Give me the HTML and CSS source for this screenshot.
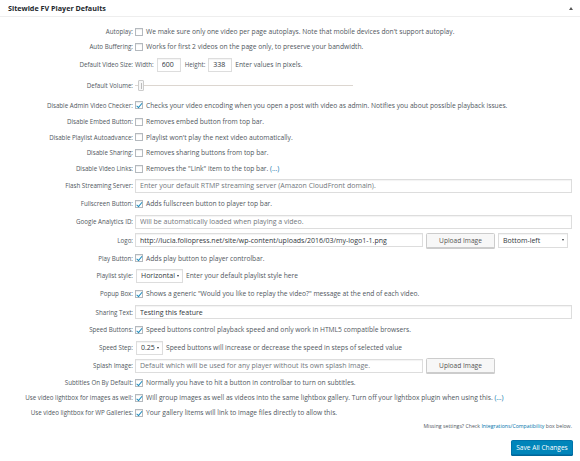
FILE: index.html
```html
<!DOCTYPE html>
<html lang="en">
<head>
<meta charset="utf-8">
<title>Sitewide FV Player Defaults</title>
<link rel="stylesheet" href="styles.css">
</head>
<body>
<div class="panel">
  <div class="panel-head">
    <h2 class="panel-title">Sitewide FV Player Defaults</h2>
    <span class="toggle"></span>
  </div>
  <div class="form">
    <div class="row h15"><label class="lbl">Autoplay:</label><div class="field"><input type="checkbox" class="cb"><span class="desc">We make sure only one video per page autoplays. Note that mobile devices don't support autoplay.</span></div></div>
    <div class="row h155"><label class="lbl">Auto Buffering:</label><div class="field"><input type="checkbox" class="cb"><span class="desc">Works for first 2 videos on the page only, to preserve your bandwidth.</span></div></div>
    <div class="row h205"><label class="lbl">Default Video Size:</label><div class="field"><span class="sub">Width:</span><input class="txt small" value="600"><span class="sub">Height:</span><input class="txt small" value="338"><span class="desc">Enter values in pixels.</span></div></div>
    <div class="row h215"><label class="lbl">Default Volume:</label><div class="field"><div class="slider"><span class="handle"></span></div></div></div>
    <div class="row h175"><label class="lbl">Disable Admin Video Checker:</label><div class="field"><input type="checkbox" class="cb" checked><span class="desc">Checks your video encoding when you open a post with video as admin. Notifies you about possible playback issues.</span></div></div>
    <div class="row h155"><label class="lbl">Disable Embed Button:</label><div class="field"><input type="checkbox" class="cb"><span class="desc">Removes embed button from top bar.</span></div></div>
    <div class="row h155"><label class="lbl">Disable Playlist Autoadvance:</label><div class="field"><input type="checkbox" class="cb"><span class="desc">Playlist won't play the next video automatically.</span></div></div>
    <div class="row h155"><label class="lbl">Disable Sharing:</label><div class="field"><input type="checkbox" class="cb"><span class="desc">Removes sharing buttons from top bar.</span></div></div>
    <div class="row h16"><label class="lbl">Disable Video Links:</label><div class="field"><input type="checkbox" class="cb"><span class="desc">Removes the "Link" item to the top bar. <a class="more" href="#">(...)</a></span></div></div>
    <div class="row h18"><label class="lbl">Flash Streaming Server:</label><div class="field"><input class="txt wide" placeholder="Enter your default RTMP streaming server (Amazon CloudFront domain)."></div></div>
    <div class="row h18"><label class="lbl">Fullscreen Button:</label><div class="field"><input type="checkbox" class="cb" checked><span class="desc">Adds fullscreen button to player top bar.</span></div></div>
    <div class="row h185"><label class="lbl">Google Analytics ID:</label><div class="field"><input class="txt wide" placeholder="Will be automatically loaded when playing a video."></div></div>
    <div class="row h185"><label class="lbl">Logo:</label><div class="field"><input class="txt url" value="http://lucia.foliopress.net/site/wp-content/uploads/2016/03/my-logo1-1.png"><button class="btn">Upload Image</button><span class="sel pos"><select><option>Bottom-left</option></select></span></div></div>
    <div class="row h175"><label class="lbl">Play Button:</label><div class="field"><input type="checkbox" class="cb" checked><span class="desc">Adds play button to player controlbar.</span></div></div>
    <div class="row h175"><label class="lbl">Playlist style:</label><div class="field"><span class="sel pl"><select><option>Horizontal</option></select></span><span class="desc">Enter your default playlist style here</span></div></div>
    <div class="row h185"><label class="lbl">Popup Box:</label><div class="field"><input type="checkbox" class="cb" checked><span class="desc">Shows a generic "Would you like to replay the video?" message at the end of each video.</span></div></div>
    <div class="row h18"><label class="lbl">Sharing Text:</label><div class="field"><input class="txt wide" value="Testing this feature"></div></div>
    <div class="row h175"><label class="lbl">Speed Buttons:</label><div class="field"><input type="checkbox" class="cb" checked><span class="desc">Speed buttons control playback speed and only work in HTML5 compatible browsers.</span></div></div>
    <div class="row h18"><label class="lbl">Speed Step:</label><div class="field"><span class="sel step"><select><option>0.25</option></select></span><span class="desc">Speed buttons will increase or decrease the speed in steps of selected value</span></div></div>
    <div class="row h185"><label class="lbl">Splash Image:</label><div class="field"><input class="txt url" placeholder="Default which will be used for any player without its own splash image."><button class="btn">Upload Image</button></div></div>
    <div class="row h15"><label class="lbl">Subtitles On By Default:</label><div class="field"><input type="checkbox" class="cb" checked><span class="desc">Normally you have to hit a button in controlbar to turn on subtitles.</span></div></div>
    <div class="row h15"><label class="lbl">Use video lightbox for images as well:</label><div class="field"><input type="checkbox" class="cb" checked><span class="desc">Will group images as well as videos into the same lightbox gallery. Turn off your lightbox plugin when using this. <a class="more" href="#">(...)</a></span></div></div>
    <div class="row h15"><label class="lbl">Use video lightbox for WP Galleries:</label><div class="field"><input type="checkbox" class="cb" checked><span class="desc">Your gallery litems will link to image files directly to allow this.</span></div></div>
    <p class="missing">Missing settings? Check <a href="#">Integrations/Compatibility</a> box below.</p>
    <div class="actions"><button class="primary">Save All Changes</button></div>
  </div>
</div>
</body>
</html>
```

FILE: styles.css
```css
* { box-sizing: border-box; }
html, body { margin: 0; padding: 0; background: #fff; }
body {
  font-family: "Open Sans", "Noto Sans", sans-serif;
  font-size: 6.7px;
  color: #32373c;
  width: 580px;
  height: 461px;
  overflow: hidden;
}
.panel { background: #fff; }
.panel-head {
  height: 17px;
  border-bottom: 1px solid #eee;
  display: flex;
  align-items: center;
  justify-content: space-between;
  padding: 0 7px 0 8px;
}
.panel-title {
  margin: 0;
  font-size: 7.2px;
  font-weight: 700;
  color: #23282d;
}
.toggle {
  width: 0; height: 0;
  border-left: 2px solid transparent;
  border-right: 2px solid transparent;
  border-bottom: 3px solid #555;
}
.form { padding: 7px 8px 0 0; }
.row { display: flex; align-items: center; }
.h15 { height: 15px; }
.h155 { height: 15.5px; }
.h16 { height: 16px; }
.h175 { height: 17.5px; }
.h18 { height: 18px; }
.h185 { height: 18.5px; }
.h205 { height: 20.5px; }
.h215 { height: 21.5px; }
.lbl {
  flex: 0 0 135px;
  text-align: right;
  padding-right: 2px;
  color: #50575e;
  font-size: 6.2px;
  white-space: nowrap;
}
.field {
  flex: 1;
  display: flex;
  align-items: center;
  min-width: 0;
  white-space: nowrap;
}
.desc { color: #50575e; margin-left: 3px; }
.sub { color: #50575e; margin-right: 3px; font-size: 6.2px; }
.sub + .txt + .sub { margin-left: 4px; }
.more, .missing a { color: #0073aa; text-decoration: none; }
.cb {
  appearance: none;
  -webkit-appearance: none;
  margin: 0;
  width: 8px; height: 8px;
  border: 1px solid #b4b9be;
  background: #fff;
  box-shadow: inset 0 1px 1px rgba(0,0,0,.08);
  position: relative;
  flex: none;
}
.cb:checked::before {
  content: "";
  position: absolute;
  left: 2.2px; top: 0px;
  width: 2px; height: 4.6px;
  border-right: 1.2px solid #1e8cbe;
  border-bottom: 1.2px solid #1e8cbe;
  transform: rotate(40deg);
}
.txt {
  font: inherit;
  font-size: 7px;
  color: #32373c;
  height: 14px;
  border: 1px solid #ddd;
  box-shadow: inset 0 1px 1px rgba(0,0,0,.05);
  background: #fff;
  padding: 0 4px;
  margin: 0;
  outline: none;
}
.txt::placeholder { color: #72777c; }
.small { width: 24px; }
.wide { width: 437px; }
.url { width: 288px; }
.btn {
  font: inherit;
  font-size: 6.6px;
  color: #555;
  margin: 0 0 0 3px;
  width: 69px;
  height: 15px;
  padding: 0;
  background: #f7f7f7;
  border: 1px solid #ccc;
  border-radius: 1.5px;
  box-shadow: 0 1px 0 #ccc;
}
.sel { position: relative; display: inline-flex; flex: none; }
.sel select {
  appearance: none;
  -webkit-appearance: none;
  font: inherit;
  font-size: 7px;
  color: #32373c;
  height: 14px;
  border: 1px solid #ddd;
  box-shadow: inset 0 1px 1px rgba(0,0,0,.05);
  background: #fff;
  padding: 0 4px;
  margin: 0;
  width: 100%;
}
.sel::after {
  content: "";
  position: absolute;
  right: 4px; top: 6px;
  border-left: 1.5px solid transparent;
  border-right: 1.5px solid transparent;
  border-top: 2px solid #32373c;
}
.pos { width: 70px; margin-left: 3px; }
.pos select { height: 15px; }
.pl { width: 47px; margin-left: 1px; }
.step { width: 27px; margin-left: 1px; }
.slider {
  width: 218px;
  height: 11px;
  display: flex;
  align-items: center;
  background: linear-gradient(#dcd6d0, #dcd6d0) center / 100% 1px no-repeat;
}
.handle {
  margin-left: 3px;
  width: 6px;
  height: 11px;
  border: 1px solid #ccc;
  background: #f7f7f7;
  border-radius: 1px;
  display: flex;
  justify-content: center;
  align-items: center;
}
.handle::after {
  content: "";
  width: 1px;
  height: 6px;
  background: #bbb;
}
.missing {
  margin: 0;
  height: 13px;
  line-height: 13px;
  text-align: right;
  font-size: 5.2px;
  color: #50575e;
  padding-right: 0;
}
.actions {
  display: flex;
  justify-content: flex-end;
  padding-top: 6.5px;
}
.primary {
  font: inherit;
  font-size: 6.6px;
  color: #fff;
  background: #0085ba;
  border: 1px solid #0073aa;
  border-radius: 1.5px;
  box-shadow: 0 1px 0 #006799;
  width: 62px;
  height: 15.5px;
  padding: 0;
  margin-right: -1px;
}
```
